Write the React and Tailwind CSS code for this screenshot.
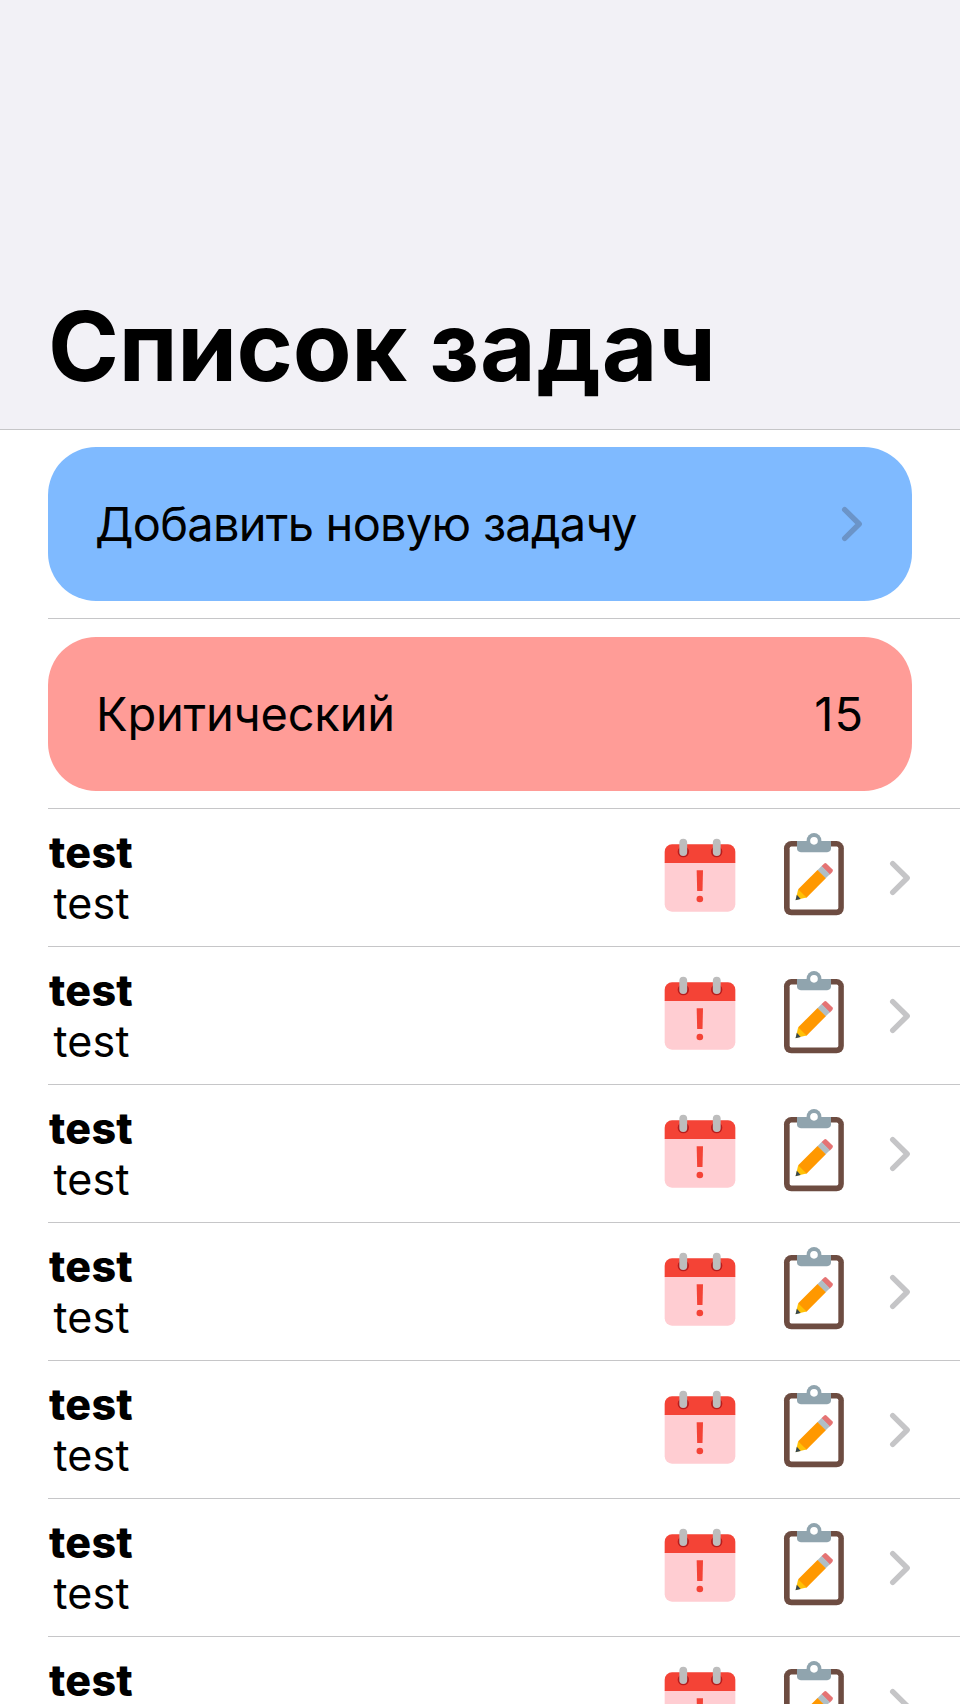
const tasks = Array.from({ length: 7 }, (_, i) => ({ id: i, title: "test", note: "test" }));

function Chevron({ className }) {
  return (
    <svg viewBox="0 0 24 38" fill="none" strokeWidth="5.4" strokeLinecap="round" strokeLinejoin="round" className={className}>
      <path d="M4.7 4.7 19.2 19 4.7 33.3" stroke="currentColor" />
    </svg>
  );
}

function CalendarIcon() {
  return (
    <svg viewBox="45 87 270 270" className="size-[90px] shrink-0">
      <path d="M74 187h212v126a22 22 0 0 1-22 22H96a22 22 0 0 1-22-22z" fill="#ffcdd2" />
      <path d="M286 189H74v-34a22 22 0 0 1 22-22h168a22 22 0 0 1 22 22z" fill="#f44336" />
      <circle cx="130" cy="155" r="17" fill="#b71c1c" />
      <circle cx="230" cy="155" r="17" fill="#b71c1c" />
      <rect x="118" y="116" width="23.500" height="52" rx="11.700" fill="#bdbdbd" />
      <rect x="218.500" y="116" width="23.500" height="52" rx="11.700" fill="#bdbdbd" />
      <path d="M170 211h19l-1.500 62h-16z" fill="#f44336" />
      <circle cx="179.500" cy="297" r="10" fill="#f44336" />
    </svg>
  );
}

function ClipboardIcon() {
  return (
    <svg viewBox="387 87 270 270" className="size-[90px] shrink-0">
      <rect x="432" y="123" width="179.500" height="223" rx="22" fill="#6d4c41" />
      <rect x="449" y="139.500" width="146" height="189" rx="5" fill="#fff" />
      <circle cx="522" cy="121" r="22" fill="#90a4ae" />
      <path d="M471 123h102v22a11.500 11.500 0 0 1-11.500 11.500h-79A11.500 11.500 0 0 1 471 145z" fill="#90a4ae" />
      <circle cx="522" cy="122.500" r="11.500" fill="#fff" />
      <path d="m577 208-17-17a6 6 0 0 0-8 0l-8 8 25 25 8-8a6 6 0 0 0 0-8z" fill="#e57373" />
      <path d="m532 211 13-13 24.500 24.500-13 13z" fill="#b0bec5" />
      <path d="m474.500 268 58-58 25 25-58 58-17-7z" fill="#ff9800" />
      <path d="m474.500 268-7.500 32 32.500-7.500z" fill="#ffc107" />
      <path d="m470.500 284.500-4 16 15.500-3.500z" fill="#37474f" />
    </svg>
  );
}

function TaskRow({ title, note }) {
  return (
    <li className="flex h-[138px] shrink-0 items-center border-b border-[#c6c6c8] pr-12">
      <div className="flex flex-1 flex-col text-[43px] leading-[51px]">
        <span className="pl-px font-extrabold tracking-[0.3px]">{title}</span>
        <span className="pl-[5.5px] tracking-[0.2px]">{note}</span>
      </div>
      <div className="flex items-center gap-6 pb-[7px]">
        <CalendarIcon />
        <ClipboardIcon />
      </div>
      <Chevron className="ml-[29px] h-[38px] w-6 text-[#c5c5c7]" />
    </li>
  );
}

export default function App() {
  return (
    <div className="flex h-[1704px] w-[960px] flex-col overflow-hidden bg-white font-['Inter',sans-serif] text-black">
      <header className="flex h-[430px] shrink-0 items-end border-b border-[#c6c6c8] bg-[#f2f1f6] px-12 pb-[23px]">
        <h1 className="text-[96px] leading-[120px] font-bold tracking-[-0.35px] whitespace-nowrap">
          Список <span className="tracking-[0.9px]">задач</span>
        </h1>
      </header>
      <main className="flex min-h-0 flex-1 flex-col overflow-hidden pl-12">
        <div className="shrink-0 border-b border-[#c6c6c8] py-[17px] pr-12">
          <button className="flex h-[154px] w-full items-center justify-between rounded-[48px] bg-[#7fbaff] pr-12 pl-[47px] text-[47px] leading-[58px]">
            <span className="tracking-[-0.75px]">Добавить новую задачу</span>
            <Chevron className="h-[38px] w-6 text-[#6b94c8]" />
          </button>
        </div>
        <div className="shrink-0 border-b border-[#c6c6c8] pt-[18px] pr-12 pb-[17px]">
          <div className="flex h-[154px] items-center justify-between rounded-[48px] bg-[#ff9c97] px-12 text-[47px] leading-[58px]">
            <span className="tracking-[-0.2px]">Критический</span>
            <span className="tracking-[1px]">15</span>
          </div>
        </div>
        <ul className="flex flex-col">
          {tasks.map((t) => (
            <TaskRow key={t.id} title={t.title} note={t.note} />
          ))}
        </ul>
      </main>
    </div>
  );
}
